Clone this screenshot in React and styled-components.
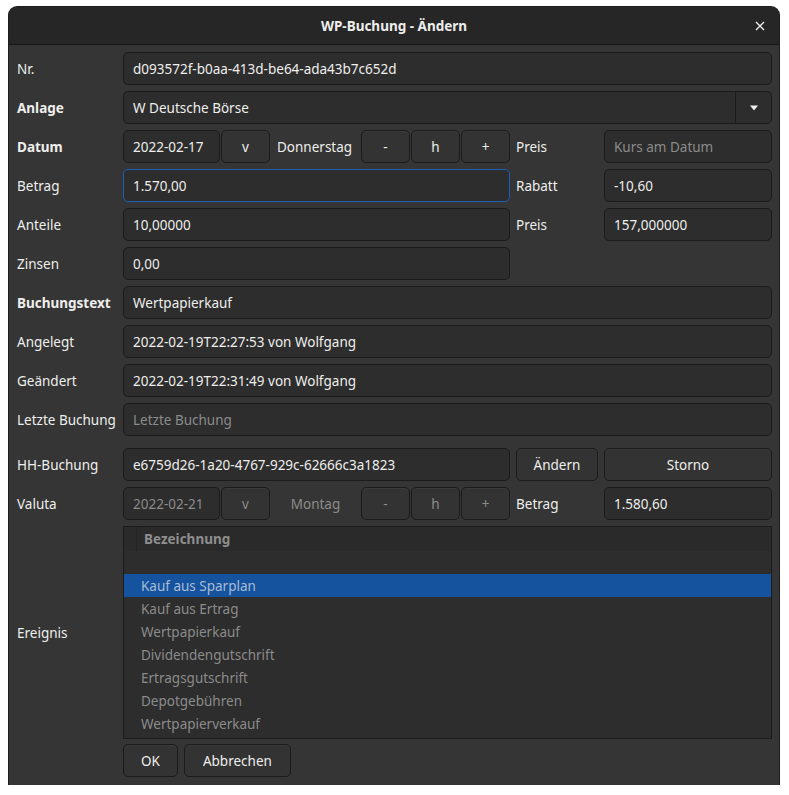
import React from "react";
import styled, { createGlobalStyle, css } from "styled-components";

const Global = createGlobalStyle`
  html, body { margin: 0; padding: 0; background: #ffffff; }
  body { font-family: "Noto Sans", "Open Sans", sans-serif; font-size: 13.5px; color: #eeeeec; }
  * { box-sizing: border-box; }
`;

const Window = styled.div`
  margin: 7px 0 0 9px;
  width: 770px;
  height: 778px;
  background: #353535;
  border-radius: 8px 8px 0 0;
  box-shadow: 0 0 0 1px #1e1e1e;
  overflow: hidden;
  display: flex;
  flex-direction: column;
`;

const TitleBar = styled.div`
  height: 38px;
  flex: none;
  background: #262626;
  border-bottom: 1px solid #151515;
  display: grid;
  grid-template-columns: 1fr auto 1fr;
  align-items: center;
`;

const Title = styled.div`
  grid-column: 2;
  font-weight: 700;
  font-size: 13.5px;
  color: #eeeeec;
`;

const Close = styled.div`
  grid-column: 3;
  justify-self: end;
  width: 30px;
  margin-right: 4px;
  display: flex;
  align-items: center;
  justify-content: center;
  color: #eeeeec;
`;

const Form = styled.div`
  flex: 1;
  padding: 7px 7px 8px 8px;
  display: grid;
  grid-template-columns: 100px 1fr 82px 168px;
  grid-template-rows: repeat(10, 33px) 0px 33px 33px 213px 33px;
  column-gap: 6px;
  row-gap: 6px;
`;

const Divider = styled.div`
  grid-column: 1 / -1;
`;

const Label = styled.div`
  display: flex;
  align-items: center;
  font-weight: ${(p) => (p.$bold ? 700 : 400)};
  color: #eeeeec;
  white-space: nowrap;
`;

const fieldBase = css`
  display: flex;
  align-items: center;
  height: 33px;
  padding: 0 9px;
  background: #2d2d2d;
  border-radius: 5px;
  white-space: nowrap;
  overflow: hidden;
`;

const Field = styled.div`
  ${fieldBase};
  grid-column: ${(p) => (p.$span ? `span ${p.$span}` : "auto")};
  color: ${(p) => (p.$placeholder || p.$disabled ? "#8b8b8b" : "#eeeeec")};
  border: 1px solid ${(p) => (p.$focus ? "#1b5fb8" : "#1b1b1b")};
`;

const Combo = styled.div`
  ${fieldBase};
  border: 1px solid #1b1b1b;
  padding: 0;
  grid-column: span 3;
`;

const ComboText = styled.div`
  flex: 1;
  padding: 0 9px;
`;

const ComboArrow = styled.div`
  width: 36px;
  height: 100%;
  border-left: 1px solid #1b1b1b;
  display: flex;
  align-items: center;
  justify-content: center;
`;

const DateGroup = styled.div`
  display: grid;
  grid-template-columns: 97px 49px 1fr 49px 49px 49px;
  column-gap: 1px;
`;

const DateField = styled.div`
  ${fieldBase};
  border: 1px solid #1b1b1b;
  color: ${(p) => (p.$disabled ? "#8b8b8b" : "#eeeeec")};
`;

const Weekday = styled.div`
  display: flex;
  align-items: center;
  justify-content: ${(p) => (p.$center ? "center" : "flex-start")};
  padding-left: ${(p) => (p.$center ? "0" : "6px")};
  color: ${(p) => (p.$disabled ? "#8b8b8b" : "#eeeeec")};
  white-space: nowrap;
`;

const Button = styled.div`
  display: flex;
  align-items: center;
  justify-content: center;
  height: 33px;
  padding: 0 ${(p) => p.$pad || 0}px;
  background: #333333;
  border: 1px solid #1b1b1b;
  border-radius: 5px;
  color: ${(p) => (p.$disabled ? "#8b8b8b" : "#eeeeec")};
  box-shadow: inset 0 1px #3a3a3a;
  white-space: nowrap;
`;

const List = styled.div`
  grid-column: span 3;
  background: #2d2d2d;
  border: 1px solid #1b1b1b;
  display: flex;
  flex-direction: column;
  overflow: hidden;
`;

const ListHeader = styled.div`
  height: 24px;
  flex: none;
  background: #2a2a2a;
  display: flex;
  align-items: center;
  padding-left: 12px;
`;

const HeaderCell = styled.div`
  height: 100%;
  display: flex;
  align-items: center;
  padding-left: 7px;
  border-left: 1px solid #242424;
  font-weight: 700;
  color: #8e8e8e;
`;

const ListRow = styled.div`
  height: 23px;
  flex: none;
  display: flex;
  align-items: center;
  padding-left: 17px;
  color: ${(p) => (p.$selected ? "#a7bcd6" : "#8b8b8b")};
  background: ${(p) => (p.$selected ? "#15539e" : "transparent")};
`;

const Actions = styled.div`
  grid-column: 2 / span 3;
  display: flex;
  gap: 6px;
  margin-top: -1px;
`;

const items = [
  "",
  "Kauf aus Sparplan",
  "Kauf aus Ertrag",
  "Wertpapierkauf",
  "Dividendengutschrift",
  "Ertragsgutschrift",
  "Depotgebühren",
  "Wertpapierverkauf",
];

function DateRow({ date, day, disabled }) {
  return (
    <DateGroup>
      <DateField $disabled={disabled}>{date}</DateField>
      <Button $disabled={disabled}>v</Button>
      <Weekday $disabled={disabled} $center={disabled}>{day}</Weekday>
      <Button $disabled={disabled}>-</Button>
      <Button $disabled={disabled}>h</Button>
      <Button $disabled={disabled}>+</Button>
    </DateGroup>
  );
}

export default function App() {
  return (
    <>
      <Global />
      <Window>
        <TitleBar>
          <Title>WP-Buchung - Ändern</Title>
          <Close>
            <svg width="10" height="10" viewBox="0 0 10 10">
              <path d="M1 1 L9 9 M9 1 L1 9" stroke="#eeeeec" strokeWidth="1.4" />
            </svg>
          </Close>
        </TitleBar>
        <Form>
          <Label>Nr.</Label>
          <Field $span={3}>d093572f-b0aa-413d-be64-ada43b7c652d</Field>

          <Label $bold>Anlage</Label>
          <Combo>
            <ComboText>W Deutsche Börse</ComboText>
            <ComboArrow>
              <svg width="10" height="6" viewBox="0 0 10 6">
                <path d="M1 0.5 L9 0.5 L5 5.5 Z" fill="#eeeeec" />
              </svg>
            </ComboArrow>
          </Combo>

          <Label $bold>Datum</Label>
          <DateRow date="2022-02-17" day="Donnerstag" />
          <Label>Preis</Label>
          <Field $placeholder>Kurs am Datum</Field>

          <Label>Betrag</Label>
          <Field $focus>1.570,00</Field>
          <Label>Rabatt</Label>
          <Field>-10,60</Field>

          <Label>Anteile</Label>
          <Field>10,00000</Field>
          <Label>Preis</Label>
          <Field>157,000000</Field>

          <Label>Zinsen</Label>
          <Field>0,00</Field>
          <div />
          <div />

          <Label $bold>Buchungstext</Label>
          <Field $span={3}>Wertpapierkauf</Field>

          <Label>Angelegt</Label>
          <Field $span={3}>2022-02-19T22:27:53 von Wolfgang</Field>

          <Label>Geändert</Label>
          <Field $span={3}>2022-02-19T22:31:49 von Wolfgang</Field>

          <Label>Letzte Buchung</Label>
          <Field $span={3} $placeholder>Letzte Buchung</Field>

          <Divider />

          <Label>HH-Buchung</Label>
          <Field>e6759d26-1a20-4767-929c-62666c3a1823</Field>
          <Button>Ändern</Button>
          <Button>Storno</Button>

          <Label>Valuta</Label>
          <DateRow date="2022-02-21" day="Montag" disabled />
          <Label>Betrag</Label>
          <Field>1.580,60</Field>

          <Label>Ereignis</Label>
          <List>
            <ListHeader>
              <HeaderCell>Bezeichnung</HeaderCell>
            </ListHeader>
            {items.map((it, i) => (
              <ListRow key={i} $selected={i === 1}>{it}</ListRow>
            ))}
          </List>

          <Actions>
            <Button $pad={17}>OK</Button>
            <Button $pad={18}>Abbrechen</Button>
          </Actions>
        </Form>
      </Window>
    </>
  );
}
